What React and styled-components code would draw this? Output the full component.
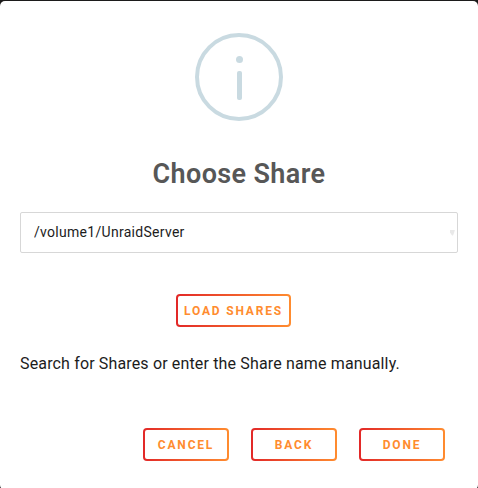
import React, { useState } from "react";
import styled, { createGlobalStyle } from "styled-components";

const GlobalStyle = createGlobalStyle`
  * {
    box-sizing: border-box;
  }
  body {
    margin: 0;
    overflow: hidden;
    background: #1c1b1b;
    font-family: Roboto, "Noto Sans", sans-serif;
    color: #1c1c1c;
  }
`;

const Modal = styled.div`
  display: flex;
  flex-direction: column;
  height: 489px;
  margin-top: 1px;
  padding: 32px 20px 0;
  border-radius: 5px;
  background: #fff;
`;

const InfoIcon = styled.svg`
  display: block;
  flex: none;
  width: 88px;
  height: 88px;
  margin: 0 auto;
`;

const Title = styled.h2`
  margin: 33px 0 0;
  height: 40px;
  line-height: 40px;
  font-size: 27px;
  font-weight: 600;
  letter-spacing: 0.36px;
  text-align: center;
  color: #575757;
`;

const Field = styled.div`
  display: flex;
  align-items: center;
  height: 41px;
  margin-top: 18px;
  padding-left: 13px;
  border: 1px solid #d7d7d7;
  border-radius: 2px;
`;

const ShareInput = styled.input`
  flex: 1;
  min-width: 0;
  padding: 0 0 2px;
  border: 0;
  outline: 0;
  background: none;
  font-family: inherit;
  font-size: 14px;
  letter-spacing: 0.29px;
  color: #1c1c1c;
`;

const Arrow = styled.span`
  width: 5px;
  height: 6px;
  margin-right: 2px;
  background: #e9e9e9;
  clip-path: polygon(0 0, 100% 0, 80% 60%, 60% 100%, 40% 100%, 0 50%);
`;

const LoadRow = styled.div`
  display: flex;
  justify-content: center;
  margin-top: 41px;
  padding-right: 11px;
`;

const Button = styled.button`
  width: ${(props) => props.$width || 86}px;
  height: 33px;
  padding: 0;
  border: 2px solid transparent;
  border-radius: 4px;
  background: linear-gradient(#fff, #fff) padding-box,
    linear-gradient(90deg, #e22828 0%, #ff8c2f 100%) border-box;
  font-family: inherit;
  font-size: 12px;
  font-weight: 700;
  letter-spacing: 1.8px;
  white-space: nowrap;
  text-transform: uppercase;
  color: #ff8c2f;
  cursor: pointer;
`;

const Text = styled.p`
  margin: 27px 0 0;
  height: 20px;
  line-height: 20px;
  font-size: 16px;
  letter-spacing: 0.15px;
  white-space: nowrap;
`;

const Actions = styled.div`
  display: flex;
  justify-content: flex-end;
  gap: 22px;
  margin-top: 54px;
  padding-right: 13px;
`;

const App = () => {
  const [share, setShare] = useState("/volume1/UnraidServer");

  return (
    <>
      <GlobalStyle />
      <Modal>
        <InfoIcon viewBox="0 0 88 88" fill="#c9dae1">
          <circle cx="44" cy="44" r="42" fill="none" stroke="#c9dae1" strokeWidth="4" />
          <circle cx="44.5" cy="26.5" r="3.5" />
          <rect x="42" y="38" width="5" height="29" rx="2" />
        </InfoIcon>
        <Title>Choose Share</Title>
        <Field>
          <ShareInput
            value={share}
            spellCheck={false}
            onChange={(e) => setShare(e.target.value)}
          />
          <Arrow />
        </Field>
        <LoadRow>
          <Button $width={115}>Load Shares</Button>
        </LoadRow>
        <Text>Search for Shares or enter the Share name manually.</Text>
        <Actions>
          <Button>Cancel</Button>
          <Button>Back</Button>
          <Button>Done</Button>
        </Actions>
      </Modal>
    </>
  );
};
export default App;
